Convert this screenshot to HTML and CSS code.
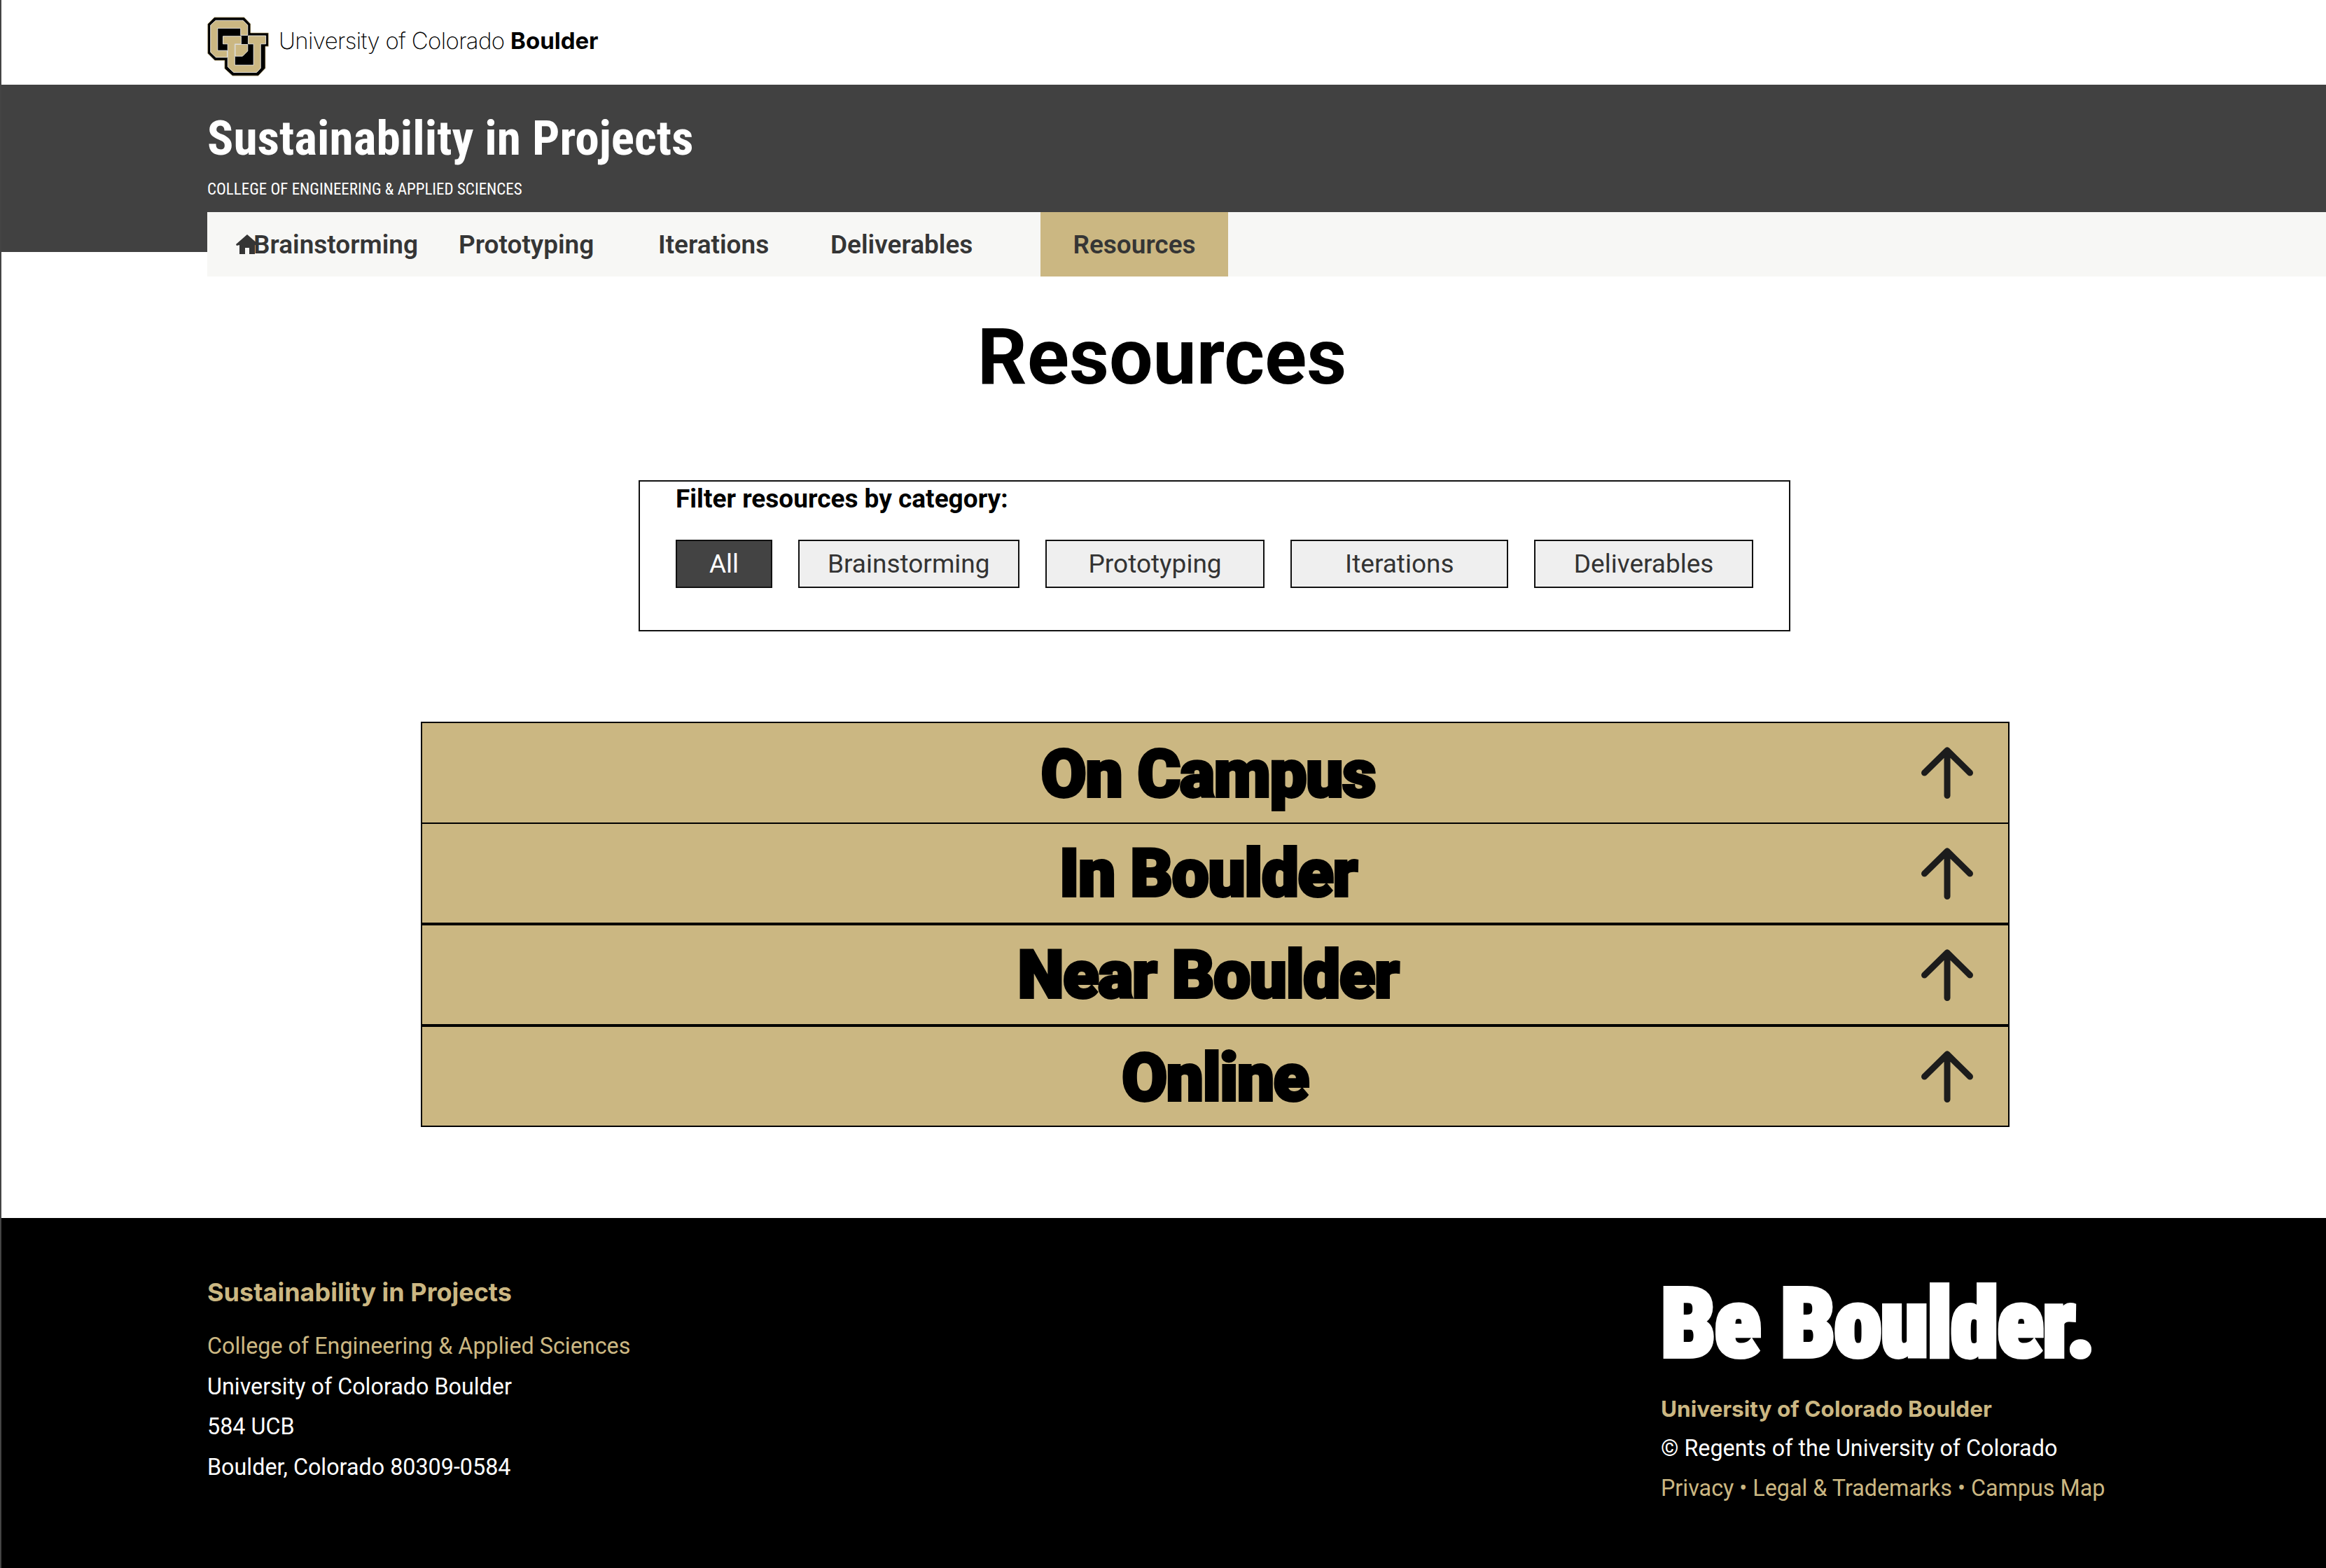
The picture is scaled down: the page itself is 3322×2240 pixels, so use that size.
FILE: index.html
```html
<!DOCTYPE html>
<html lang="en">
  <head>
    <meta charset="UTF-8" />
    <meta name="viewport" content="width=device-width, initial-scale=1.0" />
    <title>Resources - Sustainability in Projects</title>
    <link rel="stylesheet" href="styles.css">
  </head>
  <body>
    <div class="page">
      <div class="brand-bar">
        <svg class="cu-logo" viewBox="78 40 262 252" aria-hidden="true">
          <polygon class="cu-edge" points="108,42 235,42 262,70 262,108 338,108 338,165 325,165 325,258 295,290 185,290 152,260 152,225 110,225 80,195 80,70" />
          <polygon class="cu-gold" points="114,55 230,55 250,75 250,118 220,118 220,88 122,88 122,183 163,183 163,212 115,212 92,190 92,75" />
          <polygon class="cu-gold" points="145,122 222,122 222,155 195,155 195,245 275,245 275,155 252,155 252,120 327,120 327,155 305,155 305,258 288,276 190,276 165,252 165,155 145,155" />
          <polygon class="cu-gold" points="197,157 250,157 250,185 228,207 197,207" />
        </svg>
        <span class="wordmark">University of Colorado <strong>Boulder</strong></span>
      </div>

      <header class="site-header">
        <h1 class="site-title">Sustainability in Projects</h1>
        <p class="site-college">COLLEGE OF ENGINEERING &amp; APPLIED SCIENCES</p>
      </header>

      <nav class="main-nav">
        <a href="#" class="nav-link nav-brainstorming">
          <svg class="home-icon" viewBox="0 0 32 28" aria-hidden="true"><path d="M16 0 32 14l-1 2-4-1v13h-8v-9h-6v9H5V15l-4 1-1-2z"/></svg>Brainstorming
        </a>
        <a href="#" class="nav-link nav-prototyping">Prototyping</a>
        <a href="#" class="nav-link nav-iterations">Iterations</a>
        <a href="#" class="nav-link nav-deliverables">Deliverables</a>
        <a href="#" class="nav-link nav-active">Resources</a>
      </nav>

      <main class="content">
        <h2 class="page-title">Resources</h2>

        <section class="filter-box">
          <p class="filter-label">Filter resources by category:</p>
          <div class="filter-buttons">
            <button class="filter-btn filter-all">All</button>
            <button class="filter-btn filter-brainstorming">Brainstorming</button>
            <button class="filter-btn filter-prototyping">Prototyping</button>
            <button class="filter-btn filter-iterations">Iterations</button>
            <button class="filter-btn filter-deliverables">Deliverables</button>
          </div>
        </section>

        <section class="accordion">
          <div class="acc-row acc-first">
            <h3 class="acc-title">On Campus</h3>
            <svg class="acc-arrow" viewBox="0 0 74 74" aria-hidden="true"><path d="M37 69.5V5M4.5 37 37 5l32.5 32" /></svg>
          </div>
          <div class="acc-row">
            <h3 class="acc-title">In Boulder</h3>
            <svg class="acc-arrow" viewBox="0 0 74 74" aria-hidden="true"><path d="M37 69.5V5M4.5 37 37 5l32.5 32" /></svg>
          </div>
          <div class="acc-row">
            <h3 class="acc-title">Near Boulder</h3>
            <svg class="acc-arrow" viewBox="0 0 74 74" aria-hidden="true"><path d="M37 69.5V5M4.5 37 37 5l32.5 32" /></svg>
          </div>
          <div class="acc-row acc-last">
            <h3 class="acc-title">Online</h3>
            <svg class="acc-arrow" viewBox="0 0 74 74" aria-hidden="true"><path d="M37 69.5V5M4.5 37 37 5l32.5 32" /></svg>
          </div>
        </section>
      </main>

      <footer class="site-footer">
        <div class="footer-left">
          <h4 class="footer-title">Sustainability in Projects</h4>
          <p class="footer-gold">College of Engineering &amp; Applied Sciences</p>
          <p>University of Colorado Boulder</p>
          <p>584 UCB</p>
          <p>Boulder, Colorado 80309-0584</p>
        </div>
        <div class="footer-right">
          <div class="be-boulder">Be Boulder.</div>
          <p class="footer-gold footer-strong">University of Colorado Boulder</p>
          <p class="footer-regents">© Regents of the University of Colorado</p>
          <p class="footer-gold">Privacy • Legal &amp; Trademarks • Campus Map</p>
        </div>
      </footer>
    </div>
  </body>
</html>
```

FILE: styles.css
```css
* {
  box-sizing: border-box;
}

body {
  margin: 0;
  font-family: Roboto, Arial, sans-serif;
  background-color: white;
  color: black;
}

.page {
  position: relative;
  width: 3322px;
  height: 2240px;
  overflow: hidden;
  display: flex;
  flex-direction: column;
  border-left: 2px solid #444;
}

/* top bar */
.brand-bar {
  height: 121px;
  padding: 24px 0 0 294px;
  display: flex;
  align-items: flex-start;
  background-color: white;
}

.cu-logo {
  width: 88px;
  height: 85px;
}

.cu-edge {
  fill: #000;
  stroke: #cbb782;
  stroke-width: 2;
}

.cu-gold {
  fill: #cbb782;
  stroke: #f5f5f5;
  stroke-width: 2.5;
}

.wordmark {
  margin: 14px 0 0 14px;
  font-family: Inter, Arial, sans-serif;
  font-size: 33px;
  font-weight: 200;
  line-height: 40px;
  letter-spacing: -0.65px;
  white-space: nowrap;
}

.wordmark strong {
  font-weight: 700;
  letter-spacing: 0;
}

/* dark header */
.site-header {
  height: 239px;
  margin-left: -2px;
  padding: 38px 0 0 296px;
  background-color: #414141;
  color: white;
}

.site-title {
  margin: 0;
  font-stretch: 75%;
  font-size: 69.4px;
  font-weight: 700;
  line-height: 78px;
}

.site-college {
  margin: 20px 0 0;
  font-stretch: 75%;
  font-size: 23px;
  line-height: 28px;
}

.main-nav {
  height: 92px;
  margin: -57px 0 0 294px;
  display: flex;
  align-items: stretch;
  background-color: #f7f7f5;
  position: relative;
}

.nav-link {
  display: flex;
  align-items: center;
  font-size: 37px;
  font-weight: 600;
  color: #353535;
  text-decoration: none;
  white-space: nowrap;
}

.home-icon {
  width: 32px;
  height: 28px;
  margin-right: -7px;
  fill: #353535;
}

.nav-brainstorming {
  padding-left: 41px;
  width: 359px;
}

.nav-prototyping {
  width: 285px;
}

.nav-iterations {
  width: 246px;
}

.nav-deliverables {
  width: 300px;
}

.nav-active {
  width: 268px;
  justify-content: center;
  background-color: #cbb782;
}

/* main */
.content {
  flex: 1;
  display: flex;
  flex-direction: column;
}

.page-title {
  margin: 49px 0 0;
  padding-right: 5px;
  text-align: center;
  font-size: 111px;
  font-weight: 700;
  line-height: 132px;
}

.filter-box {
  width: 1645px;
  height: 216px;
  margin: 110px 0 0 910px;
  padding: 0 51px;
  border: 2px solid #111;
}

.filter-label {
  margin: 0;
  font-size: 37px;
  font-weight: 700;
  line-height: 46px;
  padding-top: 2px;
}

.filter-buttons {
  display: flex;
  margin-top: 35px;
}

.filter-btn {
  height: 69px;
  padding: 0;
  border: 2px solid #111;
  background-color: #efefef;
  color: #333;
  font-family: Roboto, Arial, sans-serif;
  font-size: 37px;
  margin-right: 37px;
}

.filter-all {
  width: 138px;
  background-color: #434343;
  color: white;
}

.filter-brainstorming {
  width: 316px;
}

.filter-prototyping {
  width: 314px;
}

.filter-iterations {
  width: 311px;
}

.filter-deliverables {
  width: 313px;
  margin-right: 0;
}

.accordion {
  width: 2269px;
  margin: 129px 0 0 599px;
}

.acc-row {
  height: 145px;
  display: grid;
  grid-template-columns: 1fr auto 1fr;
  align-items: center;
  border: 2px solid black;
  background-color: #cbb782;
}

.acc-first {
  height: 144px;
  border-bottom-width: 0;
}

.acc-title {
  grid-column: 2;
  margin: 0 20px 0 0;
  font-size: 94px;
  font-weight: 900;
  line-height: 110px;
  letter-spacing: -1.2px;
  -webkit-text-stroke: 4px black;
}

.acc-first .acc-title,
.acc-last .acc-title {
  padding-top: 4px;
}

.acc-last .acc-title {
  margin-right: 0;
}

.acc-arrow {
  grid-column: 3;
  justify-self: end;
  width: 74px;
  height: 74px;
  margin-right: 50px;
  fill: none;
  stroke: #1c1c1c;
  stroke-width: 9;
  stroke-linecap: round;
  stroke-linejoin: round;
}

/* footer */
.site-footer {
  height: 500px;
  margin-left: -2px;
  padding: 0 0 0 296px;
  display: flex;
  background-color: black;
  color: white;
  font-size: 32.3px;
  line-height: 57.6px;
}

.site-footer p {
  margin: 0;
}

.footer-left {
  width: 2076px;
  padding-top: 83px;
}

.footer-title {
  margin: 0 0 26px;
  font-family: Inter, Arial, sans-serif;
  font-size: 36px;
  font-weight: 700;
  line-height: 46px;
  color: #cbb782;
}

.footer-gold {
  color: #cbb782;
}

.footer-strong {
  font-family: Inter, Arial, sans-serif;
  font-size: 31.5px;
  font-weight: 700;
}

.be-boulder {
  margin-top: 86px;
  font-size: 138px;
  font-stretch: 86%;
  font-weight: 900;
  line-height: 130px;
  letter-spacing: -2px;
  -webkit-text-stroke: 6px white;
  white-space: nowrap;
}

.site-footer .footer-strong {
  margin-top: 28px;
}

.site-footer .footer-regents {
  margin-top: -1px;
}
```
